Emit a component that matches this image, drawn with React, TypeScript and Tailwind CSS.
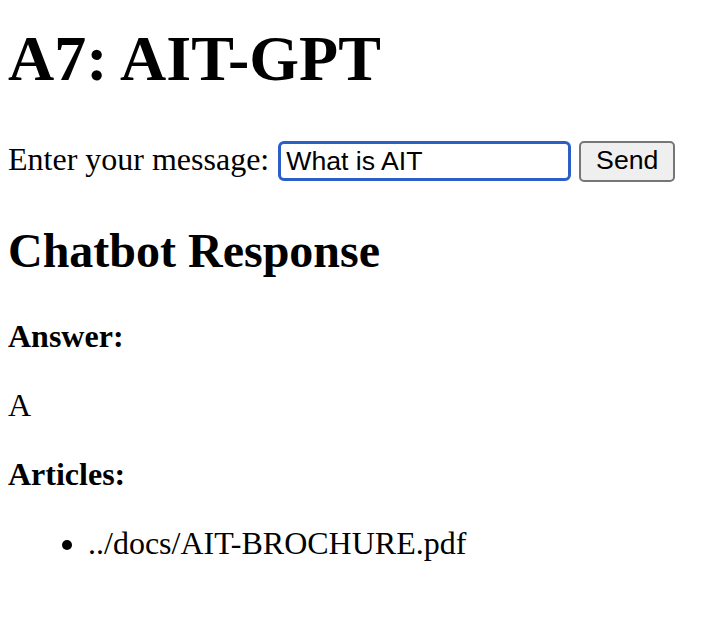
import { useState } from "react";

const serif = "font-['Liberation_Serif','Times_New_Roman',serif]";
const sans = "font-['Liberation_Sans',Arial,sans-serif]";

export default function App() {
  const [message, setMessage] = useState("What is AIT");

  return (
    <div className={`${serif} text-black bg-white min-h-screen pl-[8px] flex flex-col items-start`}>
      <h1 className="mt-[22px] text-[64px] font-bold leading-[normal]">A7: AIT-GPT</h1>

      <form className="mt-[43px] flex items-start h-[44px]" onSubmit={(e) => e.preventDefault()}>
        <label htmlFor="msg" className="mt-[2px] text-[32px] leading-[normal]">
          Enter your message:
        </label>
        <input
          id="msg"
          value={message}
          onChange={(e) => setMessage(e.target.value)}
          className={`${sans} ml-[9px] mt-[2px] w-[293px] h-[40px] rounded-[6px] border-[3px] border-[#2b5fc7] pl-[5px] text-[26.67px] text-black outline-none`}
        />
        <button
          type="submit"
          className={`${sans} ml-[8px] mt-[2px] w-[96px] h-[41px] rounded-[5px] border-2 border-[#767676] bg-[#efefef] flex items-center justify-center pb-[3px] text-[26.67px] leading-none text-black`}
        >
          Send
        </button>
      </form>

      <h2 className="mt-[40px] text-[48px] font-bold leading-[normal]">Chatbot Response</h2>

      <p className="mt-[40px] text-[32px] leading-[normal]">
        <strong>Answer:</strong>
      </p>
      <p className="mt-[32px] text-[32px] leading-[normal]">A</p>
      <p className="mt-[32px] text-[32px] leading-[normal]">
        <strong>Articles:</strong>
      </p>
      <ul className="mt-[32px] list-disc pl-[80px] text-[32px] leading-[normal]">
        <li>../docs/AIT-BROCHURE.pdf</li>
      </ul>
    </div>
  );
}
